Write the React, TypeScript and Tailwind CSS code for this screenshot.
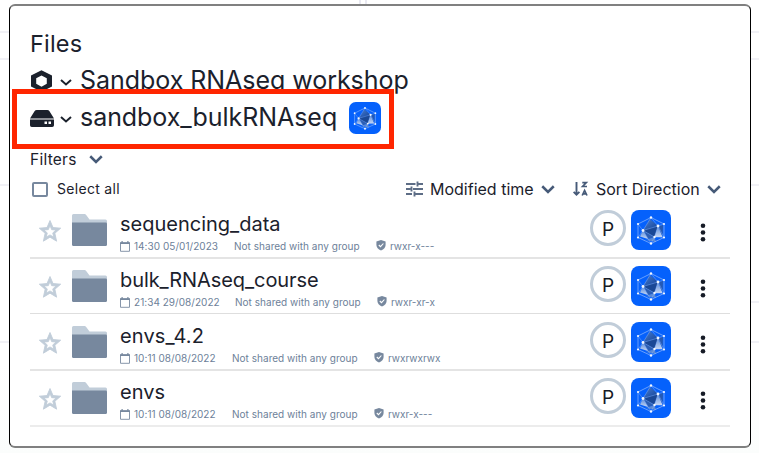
import React from "react";

function Chevron({ w, h, stroke, className = "" }: { w: number; h: number; stroke: number; className?: string }) {
  return (
    <svg width={w} height={h} viewBox={`0 0 ${w} ${h}`} fill="none" className={`shrink-0 ${className}`}>
      <path d={`M${stroke / 2} ${stroke / 2}L${w / 2} ${h - stroke * 0.8}L${w - stroke / 2} ${stroke / 2}`} stroke="currentColor" strokeWidth={stroke} />
    </svg>
  );
}

function Gem({ size, radius }: { size: number; radius: number }) {
  return (
    <svg width={size} height={size} viewBox="0 0 40 40" className="shrink-0">
      <defs>
        <linearGradient id="facet" x1="0" y1="0" x2="1" y2="1">
          <stop offset="0" stopColor="#4a80d4" />
          <stop offset="1" stopColor="#0f3f94" />
        </linearGradient>
        <linearGradient id="facetLight" x1="0" y1="0" x2="0" y2="1">
          <stop offset="0" stopColor="#5588d8" />
          <stop offset="1" stopColor="#c4d6f4" />
        </linearGradient>
      </defs>
      <rect width="40" height="40" rx={radius} fill="#0561fc" />
      <path d="M19 9L27 16L12 20.500Z" fill="url(#facet)" />
      <path d="M12 20.500L27 16L23.500 27Z" fill="#1a4896" />
      <path d="M12 20.500L23.500 27L17 29Z" fill="#2c5fb4" />
      <path d="M12 20.500L17 29L9 26.500Z" fill="url(#facetLight)" />
      <path d="M23.500 27L25 32L15 30Z" fill="#5b8ad6" />
      <path d="M27 16L31.500 27L23.500 27Z" fill="url(#facetLight)" />
      <path d="M27 16L32 15L31.500 26Z" fill="#2459b4" />
      <g fill="none" stroke="#a9c8fb" strokeWidth="0.6">
        <path d="M20 7.500L33 14V27.500L20 33.500L7 27.500V14Z" />
        <path d="M20 7.500L12 20.500L7 14M20 7.500L27 16L33 14M12 20.500L27 16L23.500 27L33 27.500L27 16M12 20.500L23.500 27L20 33.500L12 20.500L7 27.500" opacity=".6" />
      </g>
      <g fill="#f2f7ff">
        <circle cx="20" cy="7.500" r="1.2" /><circle cx="33" cy="14" r="1.1" />
        <circle cx="33" cy="27.500" r="1.1" /><circle cx="20" cy="33.500" r="1.2" />
        <circle cx="7" cy="27.500" r="1.1" /><circle cx="7" cy="14" r="1.1" />
        <circle cx="12" cy="20.500" r="1.4" /><circle cx="27" cy="16" r="1.4" />
        <circle cx="23.500" cy="27" r="1.2" />
      </g>
    </svg>
  );
}

function Star() {
  return (
    <svg width="24" height="24" viewBox="0 0 24 24" className="mt-4 ml-2 shrink-0">
      <path fill="#c1cdd9" stroke="#c1cdd9" strokeWidth="0.900" d="M22.700 9.200l-7.700-.66L12 1.500 9 8.550l-7.700.65 5.850 5.050L5.400 22.200 12 18.150l6.600 4.050-1.750-7.950zM12 15.900l-3.760 2.270 1-4.280-3.320-2.880 4.380-.38L12 6.600l1.710 4.040 4.380.38-3.320 2.880 1 4.280z" />
    </svg>
  );
}

function Folder() {
  return (
    <svg width="35" height="32" viewBox="0 0 35 32" className="mt-[11px] ml-[10px] shrink-0">
      <path fill="#c1cdd9" d="M1.500 0H12.500Q13.500 0 14.200 1L17.500 5.500H33.500Q35 5.500 35 7V20H0V1.500Q0 0 1.500 0Z" />
      <path fill="#77889e" d="M0 8.500H33.800Q35 8.500 35 9.700V30.500Q35 32 33.500 32H1.500Q0 32 0 30.500Z" />
    </svg>
  );
}

function Calendar() {
  return (
    <svg width="10" height="11" viewBox="0 0 10 11" fill="none" className="shrink-0">
      <path d="M.5 2H9.500V10.300H.5Z" stroke="#8796aa" />
      <path d="M0 1.300H10V2.900H0ZM1.500 0H2.700V2H1.500ZM7.300 0H8.500V2H7.300Z" fill="#77889e" />
    </svg>
  );
}

function Shield() {
  return (
    <svg width="10" height="11" viewBox="0 0 10 11" className="mb-[2px] shrink-0">
      <path d="M5 0L9.600 1.500V5Q9.400 8.500 5 10.500Q.6 8.500 .4 5V1.500Z" fill="#77889e" />
      <path d="M2.800 5L4.500 6.700L7.400 3.500" fill="none" stroke="white" strokeWidth="1.100" />
    </svg>
  );
}

type Entry = {
  name: string;
  date: string;
  perm: string;
  track: string;
  dateWidth: string;
  border: string;
};

const entries: Entry[] = [
  { name: "sequencing_data", date: "14:30 05/01/2023", perm: "rwxr-x---", track: "tracking-normal", dateWidth: "w-[100px]", border: "border-b-2 border-[#e4e4e4]" },
  { name: "bulk_RNAseq_course", date: "21:34 29/08/2022", perm: "rwxr-xr-x", track: "tracking-[-0.08px]", dateWidth: "w-[101px]", border: "border-b border-[#dedede] mb-px" },
  { name: "envs_4.2", date: "10:11 08/08/2022", perm: "rwxrwxrwx", track: "tracking-[0.1px]", dateWidth: "w-[98px]", border: "border-b-2 border-[#e4e4e4]" },
  { name: "envs", date: "10:11 08/08/2022", perm: "rwxr-x---", track: "tracking-normal", dateWidth: "w-[98px]", border: "border-b-2 border-[#ececec]" },
];

function Row({ e }: { e: Entry }) {
  return (
    <div className={`flex flex-1 items-start ${e.border}`}>
      <Star />
      <Folder />
      <div className="ml-[13px] flex w-[470px] flex-col pt-[7px]">
        <div className={`h-[28px] text-[20px] leading-[28px] whitespace-nowrap text-[#1b212c] ${e.track}`}>{e.name}</div>
        <div className="mt-[2px] flex h-[12px] items-center text-[10px] leading-[12px] whitespace-nowrap text-[#6d7f99]">
          <Calendar />
          <span className={`ml-1 tracking-[0.04px] ${e.dateWidth}`}>{e.date}</span>
          <span className="w-[142px] tracking-[0.03px]">Not shared with any group</span>
          <Shield />
          <span className="ml-1">{e.perm}</span>
        </div>
      </div>
      <div className="mt-[7px] flex h-9 w-9 shrink-0 items-center justify-center rounded-full border-3 border-[#c1cdd9] pt-[2px] text-[19px] leading-none text-[#161b26]">P</div>
      <div className="mt-[7px] ml-[5px] shrink-0">
        <Gem size={40} radius={8} />
      </div>
      <svg width="6" height="20" viewBox="0 0 6 20" fill="#161b26" className="mt-5 ml-[29px] shrink-0">
        <circle cx="3" cy="2.700" r="2.300" /><circle cx="3" cy="9.500" r="2.300" /><circle cx="3" cy="16.300" r="2.300" />
      </svg>
    </div>
  );
}

export default function App() {
  return (
    <div className="relative flex h-[453px] w-[759px] overflow-hidden bg-white bg-linear-to-b from-white from-80% to-[#fbfdfc] pt-1 pr-2 pb-[5px] pl-[9px] text-[#1b212c] font-['Inter','Liberation_Sans',sans-serif]">
      {/* Faint grid of the page behind the panel */}
      <div className="absolute top-[31px] left-0 h-[29px] w-full border-y-2 border-[#f1f1f6]" />
      <div className="absolute top-[184px] left-0 h-[2px] w-full bg-[#f1f1f6]" />
      <div className="absolute top-[301px] right-0 h-[2px] w-4 bg-[#f1f1f6]" />
      <div className="absolute top-[341px] left-0 h-[2px] w-full bg-[#f1f1f6]" />
      <div className="absolute top-0 left-[359px] h-1 w-2 border-x-2 border-[#e9e9f1]" />

      <main className="relative flex h-[444px] w-[742px] shrink-0 flex-col rounded-[6px] border-x border-y-2 border-x-black border-y-[#808080] bg-white px-5 pt-[19px] pb-5">
        <h1 className="h-[37px] text-[23.5px] leading-[37px] tracking-[0.2px]">Files</h1>
        <div className="flex h-[37px] items-center">
          <svg width="23" height="22" viewBox="0 0 23 22" className="mt-px shrink-0">
            <path fillRule="evenodd" fill="#1b212c" d="M11.500 .3L22 5.500V16.500L11.500 21.700L1 16.500V5.500ZM11.500 5.500L6.200 8.200V13.800L11.500 16.800L16.800 13.800V8.200Z" />
          </svg>
          <Chevron w={12} h={7} stroke={2} className="mt-1 ml-[7px] text-[#1b212c]" />
          <span className="ml-[8px] text-[25px] tracking-[-0.04px] whitespace-nowrap">Sandbox RNAseq workshop</span>
        </div>
        <div className="flex h-[37px] items-center">
          <svg width="24" height="17" viewBox="0 0 24 17" className="mt-px shrink-0">
            <path fill="#1b212c" d="M6.800 0H17.200Q18.700 0 19.500 1.200L24 8.500H0L4.500 1.200Q5.300 0 6.800 0ZM0 9.600H24V15.200Q24 17 22.200 17H1.800Q0 17 0 15.200Z" />
            <path fill="white" d="M14.500 11.500H17V14H14.500ZM18.500 11.500H21V14H18.500Z" />
          </svg>
          <Chevron w={12} h={7} stroke={2} className="mt-1 ml-[6px] text-[#1b212c]" />
          <span className="ml-[8px] w-[269px] text-[25px] tracking-[-0.05px] whitespace-nowrap">sandbox_bulkRNAseq</span>
          <Gem size={32} radius={8.5} />
        </div>
        <div className="mt-[12px] flex h-[23px] items-center text-[15.5px]">
          <span className="w-[59px] tracking-[0.25px]">Filters</span>
          <Chevron w={14} h={9} stroke={2.5} className="text-[#465a78]" />
        </div>
        <div className="mt-[6px] flex h-[24px] items-center">
          <div className="ml-[2px] h-[15px] w-4 rounded-[2px] border-2 border-[#77889e]" />
          <span className="ml-[9px] w-[349px] pb-[2px] text-[14px] tracking-[0.3px]">Select all</span>
          <svg width="17" height="16" viewBox="0 0 17 16" className="shrink-0" stroke="#5d6d86" strokeWidth="1.900" fill="none">
            <path d="M0 3H9.500M12 3H17M11.500 .5V5.500M0 8H4.500M7 8H17M5.500 5.500V10.500M0 13H6M9 13H17M8.500 10.500V15.500" />
          </svg>
          <span className="ml-[7px] w-[111px] text-[16px] whitespace-nowrap">Modified time</span>
          <Chevron w={14} h={9} stroke={2.5} className="text-[#465a78]" />
          <svg width="16" height="16" viewBox="0 0 16 16" className="ml-[18px] shrink-0" fill="none" stroke="#465a78" strokeWidth="1.900">
            <path d="M3.500 1V14M.6 10.800L3.500 13.700L6.400 10.800" />
            <path d="M9.300 1.600H13.300L9.600 5.500H14M9.200 14.500L11.600 9.500L14 14.500M10 12.800H13.200" strokeWidth="1.700" />
          </svg>
          <span className="ml-[7px] w-[111px] text-[16px] whitespace-nowrap">Sort Direction</span>
          <Chevron w={14} h={9} stroke={2.5} className="text-[#465a78]" />
        </div>
        <div className="mt-[2px] grid h-[224px] shrink-0 grid-rows-4">
          {entries.map((e) => (
            <div key={e.name} className="flex h-14 flex-col">
              <Row e={e} />
            </div>
          ))}
        </div>
        {/* Highlight around the volume selector */}
        <div className="absolute top-[83px] left-[2px] h-[60px] w-[382px] border-[5px] border-[#ff2600]" />
      </main>
    </div>
  );
}
